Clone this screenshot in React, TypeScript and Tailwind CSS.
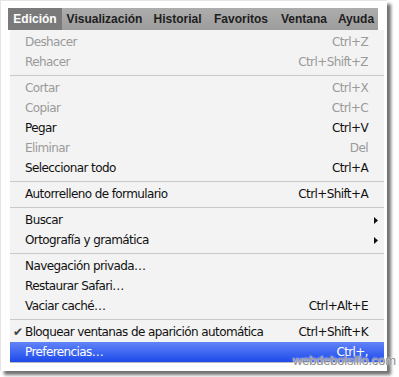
type Item = {
  label: string;
  shortcut?: string;
  disabled?: boolean;
  submenu?: boolean;
  checked?: boolean;
  active?: boolean;
};

const groups: Item[][] = [
  [
    { label: "Deshacer", shortcut: "Ctrl+Z", disabled: true },
    { label: "Rehacer", shortcut: "Ctrl+Shift+Z", disabled: true },
  ],
  [
    { label: "Cortar", shortcut: "Ctrl+X", disabled: true },
    { label: "Copiar", shortcut: "Ctrl+C", disabled: true },
    { label: "Pegar", shortcut: "Ctrl+V" },
    { label: "Eliminar", shortcut: "Del", disabled: true },
    { label: "Seleccionar todo", shortcut: "Ctrl+A" },
  ],
  [{ label: "Autorrelleno de formulario", shortcut: "Ctrl+Shift+A" }],
  [
    { label: "Buscar", submenu: true },
    { label: "Ortografía y gramática", submenu: true },
  ],
  [
    { label: "Navegación privada…" },
    { label: "Restaurar Safari…" },
    { label: "Vaciar caché…", shortcut: "Ctrl+Alt+E" },
  ],
  [
    { label: "Bloquear ventanas de aparición automática", shortcut: "Ctrl+Shift+K", checked: true },
    { label: "Preferencias…", shortcut: "Ctrl+,", active: true },
  ],
];

// label + width of each menubar slot
const menus: [string, string][] = [
  ["Edición", "w-[54px]"],
  ["Visualización", "w-[85px]"],
  ["Historial", "w-[61px]"],
  ["Favoritos", "w-[66px]"],
  ["Ventana", "w-[60px]"],
  ["Ayuda", "w-[44px]"],
];

function Row({ item }: { item: Item }) {
  const color = item.active
    ? "text-white"
    : item.disabled
      ? "text-[#9a9a9a]"
      : "text-[#111]";
  return (
    <div
      className={`relative flex h-5 items-center pl-[15px] pr-[16px] ${color} ${
        item.active ? "bg-gradient-to-b from-[#6283f8] to-[#1c48e9]" : ""
      }`}
    >
      {item.checked && (
        <span className="absolute left-[3px] top-[1px] text-[12px] text-[#444]">✔</span>
      )}
      <span className="flex-1">{item.label}</span>
      {item.shortcut && <span>{item.shortcut}</span>}
      {item.submenu && (
        <svg width="4" height="7" viewBox="0 0 4 7" className="absolute right-[6px] top-[7px]">
          <path d="M0 0 L4 3.5 L0 7 Z" fill="#111" />
        </svg>
      )}
    </div>
  );
}

export default function App() {
  return (
    <div
      className="relative h-[377px] w-[399px] overflow-hidden bg-white"
      style={{ fontFamily: '"DejaVu Sans", sans-serif' }}
    >
      <div className="h-[371px] w-[387px] border-l border-t border-[#e4e4e4] bg-white pl-[7px] pt-[7px] shadow-[4px_4px_3px_rgba(0,0,0,0.55)]">
        <div
          className="flex h-[22px] w-[370px] items-center bg-gradient-to-b from-[#adadad] to-[#9c9c9c] text-[12px] font-bold text-[#1e1e1e]"
          style={{ fontFamily: '"Liberation Sans", Arial, sans-serif' }}
        >
          {menus.map(([m, w], i) => (
            <div
              key={m}
              className={`flex h-full items-center justify-center ${w} ${
                i === 0 ? "bg-[#7a7a7a] text-white" : ""
              }`}
            >
              {m}
            </div>
          ))}
        </div>
        <div className="ml-[2px] w-[374px] border-b border-[#bcbcbc] bg-[#f3f3f3] pt-[2px] text-[12px] tracking-[-0.6px]">
          {groups.map((g, gi) => (
            <div key={gi}>
              {gi > 0 && (
                <div className="flex h-[6px] items-center">
                  <div className="h-px w-full bg-[#c9c9c9]" />
                </div>
              )}
              {g.map((it) => (
                <Row key={it.label} item={it} />
              ))}
            </div>
          ))}
        </div>
      </div>
      <div
        className="absolute left-[293px] top-[351px] text-[13px] tracking-[-0.2px] text-[#8a8a8a]"
        style={{ fontFamily: '"Liberation Sans", sans-serif', textShadow: "0 0 2px #fff, 0 0 1px #fff" }}
      >
        webdebolsillo.com
      </div>
    </div>
  );
}
